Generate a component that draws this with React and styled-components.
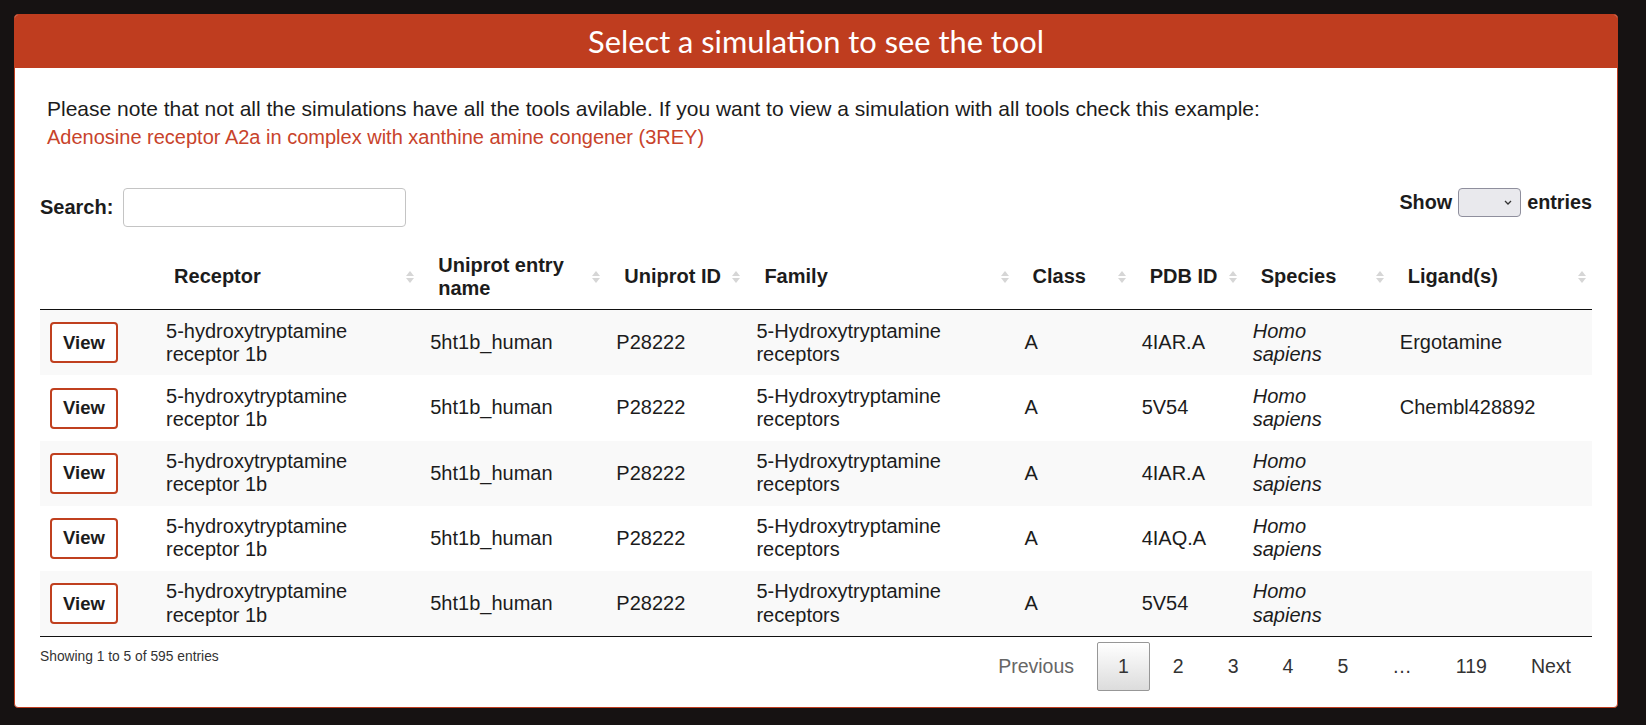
import React from "react";
import styled, { createGlobalStyle } from "styled-components";

const GlobalStyle = createGlobalStyle`
  html, body {
    margin: 0;
    padding: 0;
    background-color: #161212;
  }
  body {
    font-family: "Liberation Sans", Arial, sans-serif;
    color: #1c1c1c;
  }
`

const Page = styled.div`
  padding: 14px 28px 0 14px;
  min-height: 725px;
  box-sizing: border-box;
`

const Panel = styled.section`
  background-color: #fff;
  border: 1px solid #bf3d1f;
  border-radius: 4px;
  overflow: hidden;
`

const PanelHeader = styled.h1`
  margin: 0;
  height: 53px;
  background-color: #bf3d1f;
  color: #fff;
  font-family: Lato, "Open Sans", sans-serif;
  font-weight: 400;
  font-size: 30.8px;
  line-height: 53px;
  text-align: center;
`

const PanelBody = styled.div`
  padding: 0 25px 16px 25px;
`

const Note = styled.p`
  margin: 27px 0 0 0;
  padding-left: 7px;
  font-size: 21px;
  line-height: 28.4px;
  color: #1c1c1c;
`

const ExampleLink = styled.a`
  color: #c8432b;
  font-size: 20px;
  text-decoration: none;
`

const Controls = styled.div`
  display: flex;
  justify-content: space-between;
  align-items: flex-start;
  margin-top: 36px;
`

const ControlGroup = styled.label`
  display: flex;
  align-items: center;
  gap: ${(p) => p.$gap || 6}px;
  font-weight: 700;
  font-size: ${(p) => p.$size || 19.8}px;
`

const SearchInput = styled.input`
  width: 283px;
  height: 39px;
  box-sizing: border-box;
  border: 1px solid #c4c4c4;
  border-radius: 4px;
  padding: 4px 8px;
  font-size: 16px;
`

const SelectWrap = styled.span`
  position: relative;
  display: inline-flex;
`

const LengthSelect = styled.select`
  appearance: none;
  width: 63px;
  height: 29px;
  box-sizing: border-box;
  background-color: #e9e9ed;
  border: 1px solid #8f8f9d;
  border-radius: 4px;
  font-size: 16px;
`

const Chevron = styled.svg`
  position: absolute;
  right: 9px;
  top: 12px;
  pointer-events: none;
`

const Table = styled.table`
  width: 100%;
  table-layout: fixed;
  border-collapse: separate;
  border-spacing: 0;
  margin-top: 17px;
  font-size: 20px;
  border-bottom: 1px solid #111;
`

const Col = styled.col`
  width: ${(p) => p.$w}px;
`

const Th = styled.th`
  box-sizing: border-box;
  padding: 10px 6px 10px 18px;
  border-bottom: 1px solid #111;
  text-align: left;
  vertical-align: middle;
  font-weight: 700;
  line-height: 22.7px;
`

const ThInner = styled.div`
  display: flex;
  align-items: center;
  justify-content: space-between;
  gap: 8px;
`

const SortIcon = () => (
  <svg width="8" height="14" viewBox="0 0 8 14" style={{ flexShrink: 0 }}>
    <polygon points="0,6 4,1 8,6" fill="#d6d6d6" />
    <polygon points="0,8 4,13 8,8" fill="#d6d6d6" />
  </svg>
)

const Row = styled.tr`
  background-color: ${(p) => (p.$odd ? "#f9f9f9" : "#fff")};
  & + & td {
    border-top: 1px solid #ddd;
  }
`

const Td = styled.td`
  box-sizing: border-box;
  padding: 9.4px 10px;
  line-height: 23.2px;
  vertical-align: middle;
`

const ViewButton = styled.button`
  width: 68px;
  height: 41px;
  box-sizing: border-box;
  background: #fff;
  border: 2px solid #c0401f;
  border-radius: 4px;
  font-family: "Liberation Sans", Arial, sans-serif;
  font-weight: 700;
  font-size: 18.5px;
  color: #1c1c1c;
  padding: 0;
`

const Species = styled.em`
  display: inline-block;
  width: min-content;
`

const Footer = styled.div`
  display: flex;
  justify-content: space-between;
  align-items: flex-start;
`

const Info = styled.div`
  padding-top: 12px;
  font-size: 13.8px;
  color: #333;
`

const Pager = styled.div`
  display: flex;
  padding-top: 5px;
  font-size: 19.5px;
`

const PageButton = styled.span`
  box-sizing: border-box;
  min-width: 1.5em;
  padding: ${(p) => (p.$ellipsis ? "0 20px" : "9.75px 20px")};
  margin-left: 2px;
  line-height: 27.5px;
  text-align: center;
  border: 1px solid ${(p) => (p.$current ? "#979797" : "transparent")};
  border-radius: 2px;
  color: ${(p) => (p.$disabled ? "#666" : "#333")};
  background: ${(p) =>
    p.$current ? "linear-gradient(to bottom, #fff 0%, #dcdcdc 100%)" : "transparent"};
  align-self: ${(p) => (p.$ellipsis ? "center" : "auto")};
`

const columns = [
  { title: "", w: 116, sort: false },
  { title: "Receptor", w: 264, sort: true },
  { title: "Uniprot entry name", w: 186, sort: true },
  { title: "Uniprot ID", w: 140, sort: true },
  { title: "Family", w: 268, sort: true },
  { title: "Class", w: 117, sort: true },
  { title: "PDB ID", w: 111, sort: true },
  { title: "Species", w: 147, sort: true },
  { title: "Ligand(s)", w: 202, sort: true },
]

const rows = [
  { pdb: "4IAR.A", ligand: "Ergotamine" },
  { pdb: "5V54", ligand: "Chembl428892" },
  { pdb: "4IAR.A", ligand: "" },
  { pdb: "4IAQ.A", ligand: "" },
  { pdb: "5V54", ligand: "" },
]

const App = () => {
  return (
    <>
      <GlobalStyle />
      <Page>
        <Panel>
          <PanelHeader>Select a simulation to see the tool</PanelHeader>
          <PanelBody>
            <Note>
              Please note that not all the simulations have all the tools avilable. If you want to view a simulation with all tools check this example:
              <br />
              <ExampleLink href="#">Adenosine receptor A2a in complex with xanthine amine congener (3REY)</ExampleLink>
            </Note>

            <Controls>
              <ControlGroup $gap={10} $size={20}>
                Search:
                <SearchInput type="search" />
              </ControlGroup>
              <ControlGroup>
                Show
                <SelectWrap>
                  <LengthSelect defaultValue="" />
                  <Chevron width="8" height="5" viewBox="0 0 8 5">
                    <path d="M1 1 L4 4 L7 1" fill="none" stroke="#333" strokeWidth="1.3" />
                  </Chevron>
                </SelectWrap>
                entries
              </ControlGroup>
            </Controls>

            <Table>
              <colgroup>
                {columns.map((c, i) => (
                  <Col key={i} $w={c.w} />
                ))}
              </colgroup>
              <thead>
                <tr>
                  {columns.map((c, i) => (
                    <Th key={i}>
                      <ThInner>
                        <span>{c.title}</span>
                        {c.sort && <SortIcon />}
                      </ThInner>
                    </Th>
                  ))}
                </tr>
              </thead>
              <tbody>
                {rows.map((r, i) => (
                  <Row key={i} $odd={i % 2 === 0}>
                    <Td><ViewButton>View</ViewButton></Td>
                    <Td>5-hydroxytryptamine receptor 1b</Td>
                    <Td>5ht1b_human</Td>
                    <Td>P28222</Td>
                    <Td>5-Hydroxytryptamine receptors</Td>
                    <Td>A</Td>
                    <Td>{r.pdb}</Td>
                    <Td><Species>Homo sapiens</Species></Td>
                    <Td>{r.ligand}</Td>
                  </Row>
                ))}
              </tbody>
            </Table>

            <Footer>
              <Info>Showing 1 to 5 of 595 entries</Info>
              <Pager>
                <PageButton $disabled>Previous</PageButton>
                <PageButton $current>1</PageButton>
                <PageButton>2</PageButton>
                <PageButton>3</PageButton>
                <PageButton>4</PageButton>
                <PageButton>5</PageButton>
                <PageButton $ellipsis>…</PageButton>
                <PageButton>119</PageButton>
                <PageButton>Next</PageButton>
              </Pager>
            </Footer>
          </PanelBody>
        </Panel>
      </Page>
    </>
  );
}

export default App
